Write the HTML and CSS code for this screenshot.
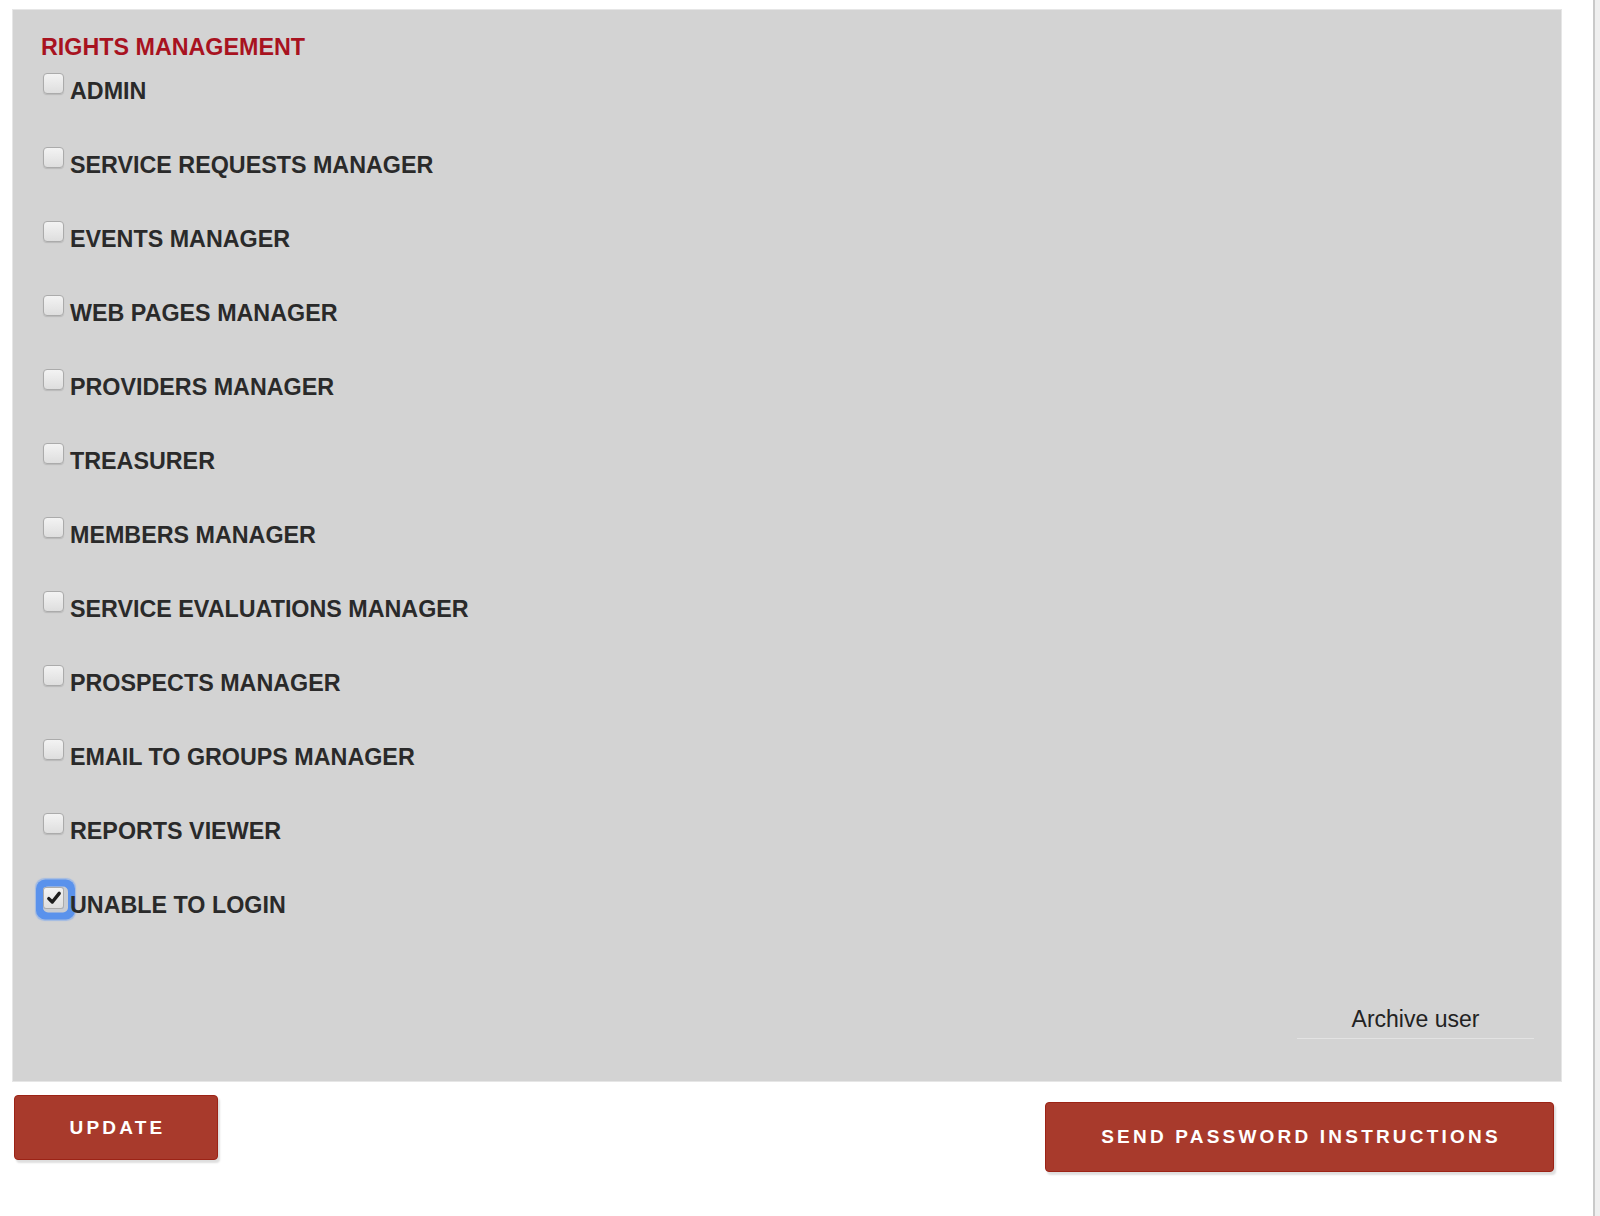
FILE: index.html
```html
<!DOCTYPE html>
<html lang="en">
<head>
    <meta charset="UTF-8">
    <meta name="viewport" content="width=device-width, initial-scale=1.0">
    <title>User rights</title>
    <link rel="stylesheet" href="styles.css">
</head>
<body>
    <div class="page">
        <form class="rights-panel">
            <h2 class="rights-title">RIGHTS MANAGEMENT</h2>

            <div class="rights-list">
                <label class="right-row"><span class="check"></span><span class="right-name">ADMIN</span></label>
                <label class="right-row"><span class="check"></span><span class="right-name">SERVICE REQUESTS MANAGER</span></label>
                <label class="right-row"><span class="check"></span><span class="right-name">EVENTS MANAGER</span></label>
                <label class="right-row"><span class="check"></span><span class="right-name">WEB PAGES MANAGER</span></label>
                <label class="right-row"><span class="check"></span><span class="right-name">PROVIDERS MANAGER</span></label>
                <label class="right-row"><span class="check"></span><span class="right-name">TREASURER</span></label>
                <label class="right-row"><span class="check"></span><span class="right-name">MEMBERS MANAGER</span></label>
                <label class="right-row"><span class="check"></span><span class="right-name">SERVICE EVALUATIONS MANAGER</span></label>
                <label class="right-row"><span class="check"></span><span class="right-name">PROSPECTS MANAGER</span></label>
                <label class="right-row"><span class="check"></span><span class="right-name">EMAIL TO GROUPS MANAGER</span></label>
                <label class="right-row"><span class="check"></span><span class="right-name">REPORTS VIEWER</span></label>
                <label class="right-row">
                    <span class="check checked focused">
                        <svg viewBox="0 0 16 16" width="16" height="16">
                            <path d="M2.8 8.6 L6.3 12 L13.2 3.4" fill="none" stroke="#1d1d1d" stroke-width="3.4" stroke-linecap="round" stroke-linejoin="round"/>
                        </svg>
                    </span><span class="right-name">UNABLE TO LOGIN</span>
                </label>
            </div>

            <div class="archive-row">
                <a class="archive-link">Archive user</a>
            </div>
        </form>

        <div class="actions">
            <button class="btn btn-update">UPDATE</button>
            <button class="btn btn-send">SEND PASSWORD INSTRUCTIONS</button>
        </div>
    </div>
</body>
</html>
```

FILE: styles.css
```css
* {
    box-sizing: border-box;
    margin: 0;
    padding: 0;
}

body {
    font-family: 'Liberation Sans', Arial, Helvetica, sans-serif;
    background: #efefef;
}

.page {
    width: 1595px;
    min-height: 1216px;
    background: #fff;
    border-right: 2px solid #c9c9c9;
    padding-top: 10px;
}

.rights-panel {
    width: 1548px;
    margin-left: 13px;
    background: #d3d3d3;
    box-shadow: 0 0 0 1px #e6e6e6;
    padding: 24px 27px 42px 28px;
}

.rights-title {
    font-size: 23.3px;
    line-height: 26px;
    font-weight: bold;
    color: #a8121f;
    margin-bottom: 13px;
}

.rights-list {
    padding-left: 2px;
}

.right-row {
    display: flex;
    align-items: flex-start;
    height: 74px;
}

.check {
    width: 21px;
    height: 21px;
    flex: none;
    display: flex;
    align-items: center;
    justify-content: center;
    margin-right: 6px;
    border: 1px solid #ababab;
    border-radius: 4px;
    background: linear-gradient(#f3f3f3, #dedede);
    box-shadow: 0 1px 1px rgba(0, 0, 0, 0.12);
}

.check.focused {
    height: 22px;
    border-radius: 3px;
    box-shadow:
        2px 1.5px 0 2px #c9ccd1,
        2px 1.5px 0 9px #5a92ec,
        2px 1.5px 1px 10px rgba(120, 165, 240, 0.55);
}

.right-name {
    font-size: 23.3px;
    line-height: 26px;
    font-weight: bold;
    color: #2a2a2a;
    margin-top: 5px;
}

.archive-row {
    display: flex;
    justify-content: flex-end;
    margin-top: 45px;
}

.archive-link {
    width: 237px;
    font-size: 23px;
    line-height: 26px;
    color: #222;
    text-align: center;
    padding-bottom: 6px;
    border-bottom: 1px solid #e3e3e3;
    cursor: pointer;
}

.actions {
    width: 1548px;
    margin-left: 13px;
    display: flex;
    justify-content: space-between;
    align-items: flex-start;
}

.btn {
    font-family: inherit;
    font-size: 19px;
    font-weight: bold;
    color: #fff;
    letter-spacing: 3.2px;
    padding-left: 3px;
    background: #a83a2c;
    border: 1px solid #9c2316;
    border-radius: 4px;
    box-shadow: 2px 3px 2px rgba(0, 0, 0, 0.13);
    cursor: pointer;
}

.btn-update {
    width: 204px;
    height: 65px;
    margin-top: 14px;
    margin-left: 1px;
}

.btn-send {
    width: 509px;
    height: 70px;
    margin-top: 21px;
    margin-right: 7px;
}
```
